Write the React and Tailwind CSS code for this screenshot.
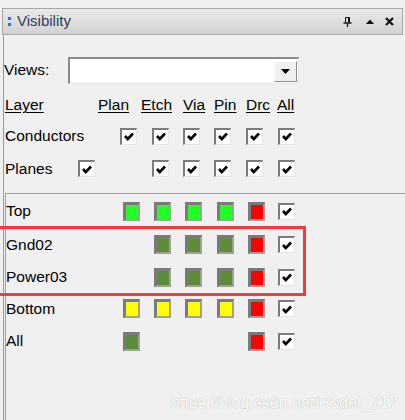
import React from "react";

const Check = () => (
  <div className="w-[17px] h-[17px] border-t-2 border-l-2 border-t-[#7c7c7c] border-l-[#7c7c7c] border-r border-b border-r-[#e6e6e6] border-b-[#e6e6e6] bg-white flex items-center justify-center">
    <svg width="10" height="9" viewBox="0 0 10 9">
      <path d="M1 4 L3.8 7 L9 1.5" stroke="#000" strokeWidth="2.6" fill="none" />
    </svg>
  </div>
);

const Box = ({ c, ml = "ml-[2px]" }) => (
  <div className={`${ml} w-[17px] h-[19px] border-t-[3px] border-l-[3px] border-t-[#7a7a7a] border-l-[#7a7a7a] border-r-2 border-b-2 border-r-[#a0a0a0] border-b-[#a0a0a0] flex`}>
    <div className={`flex-1 ${c}`} />
  </div>
);

const G = "bg-[#22ff22]";
const D = "bg-[#5e8c3a]";
const R = "bg-[#ff0000]";
const Y = "bg-[#ffff00]";

const font = "font-['Liberation_Sans',Arial,sans-serif]";

export default function App() {
  return (
    <div className={`relative w-[405px] h-[420px] bg-[#f0f0f0] overflow-hidden text-[15.5px] text-black ${font}`}>
      <div className="h-[8px]" />
      {/* Title bar */}
      <div className="mx-[2px] h-[27px] border border-[#a8a8a8] bg-gradient-to-b from-[#e9e9e9] to-[#d2d2d2] flex items-center">
        <div className="ml-[5px] flex flex-col gap-[3px]">
          <div className="w-[3px] h-[3px] bg-[#1f7ae0]" />
          <div className="w-[3px] h-[3px] bg-[#1f7ae0]" />
        </div>
        <span className="ml-[6px] text-[15px] text-[#2a3d5c]">Visibility</span>
        <div className="ml-auto flex items-center mr-[8px]">
          <svg width="9" height="10" viewBox="0 0 9 10" className="mr-[14px]">
            <path d="M2.5 0.5 H6.5 V5.5 M5.5 0.5 V5.5" stroke="#111" strokeWidth="1" fill="none" />
            <path d="M2.5 0.5 V5.5" stroke="#111" strokeWidth="1" />
            <path d="M0.5 6 H8.5" stroke="#111" strokeWidth="1.4" />
            <path d="M4.5 6 V10" stroke="#111" strokeWidth="1.2" />
          </svg>
          <svg width="8" height="5" viewBox="0 0 8 5" className="mr-[11px]">
            <path d="M0 5 L4 0.5 L8 5 Z" fill="#111" />
          </svg>
          <svg width="9" height="9" viewBox="0 0 9 9">
            <path d="M1 1 L8 8 M8 1 L1 8" stroke="#111" strokeWidth="2.2" />
          </svg>
        </div>
      </div>

      {/* Panel */}
      <div className="ml-[3px] border-l border-[#9a9a9a] h-[385px] flex flex-col">
        <div className="h-[22px]" />
        {/* Views row */}
        <div className="flex items-center h-[27px]">
          <div className="w-[64px] -mt-[1px]">Views:</div>
          <div className="w-[231px] h-[27px] border-t-2 border-l-2 border-t-[#8a8a8a] border-l-[#8a8a8a] border-r border-b border-r-[#e4e4e4] border-b-[#e4e4e4] bg-white flex items-center justify-end pr-[1px]">
            <div className="w-[23px] h-[21px] bg-[#f0f0f0] border-t border-l border-t-white border-l-white border-r border-b border-r-[#8a8a8a] border-b-[#8a8a8a] flex items-center justify-center">
              <svg width="9" height="5" viewBox="0 0 9 5">
                <path d="M0 0 H9 L4.5 5 Z" fill="#000" />
              </svg>
            </div>
          </div>
        </div>

        {/* Header */}
        <div className="mt-[6px] h-[30px] flex items-center underline underline-offset-2">
          <div className="ml-[1px] w-[93px]">Layer</div>
          <div className="w-[43px]">Plan</div>
          <div className="w-[42px]">Etch</div>
          <div className="w-[31px]">Via</div>
          <div className="w-[32px]">Pin</div>
          <div className="w-[31px]">Drc</div>
          <div>All</div>
        </div>

        {/* Upper grid */}
        <div className="grid grid-cols-[74px_42px_32px_31px_31px_32px_32px_1fr] grid-rows-[32px_33px] items-center">
          <div className="col-start-1 ml-[1px] whitespace-nowrap">Conductors</div>
          <div className="col-start-3"><Check /></div>
          <div className="col-start-4"><Check /></div>
          <div className="col-start-5"><Check /></div>
          <div className="col-start-6"><Check /></div>
          <div className="col-start-7"><Check /></div>
          <div className="col-start-8"><Check /></div>

          <div className="col-start-1 ml-[1px]">Planes</div>
          <div className="col-start-2"><Check /></div>
          <div className="col-start-4"><Check /></div>
          <div className="col-start-5"><Check /></div>
          <div className="col-start-6"><Check /></div>
          <div className="col-start-7"><Check /></div>
          <div className="col-start-8"><Check /></div>
        </div>

        {/* Lower pane */}
        <div className="mt-[8px] ml-[1px] flex-1 border-t border-l border-[#a0a0a0]">
          <div className="grid grid-cols-[114px_32px_31px_31px_32px_32px_1fr] grid-rows-[34px_33px_32px_31px_34px] items-center">
            <div className="col-start-1 row-start-1">Top</div>
            <div className="col-start-2 row-start-1"><Box c={G} ml="ml-[3px]" /></div>
            <div className="col-start-3 row-start-1"><Box c={G} /></div>
            <div className="col-start-4 row-start-1"><Box c={G} /></div>
            <div className="col-start-5 row-start-1"><Box c={G} ml="ml-[3px]" /></div>
            <div className="col-start-6 row-start-1"><Box c={R} /></div>
            <div className="col-start-7 row-start-1"><Check /></div>

            <div className="col-start-1 row-start-2">Gnd02</div>
            <div className="col-start-3 row-start-2"><Box c={D} /></div>
            <div className="col-start-4 row-start-2"><Box c={D} /></div>
            <div className="col-start-5 row-start-2"><Box c={D} ml="ml-[3px]" /></div>
            <div className="col-start-6 row-start-2"><Box c={R} /></div>
            <div className="col-start-7 row-start-2"><Check /></div>

            <div className="col-start-1 row-start-3">Power03</div>
            <div className="col-start-3 row-start-3"><Box c={D} /></div>
            <div className="col-start-4 row-start-3"><Box c={D} /></div>
            <div className="col-start-5 row-start-3"><Box c={D} ml="ml-[3px]" /></div>
            <div className="col-start-6 row-start-3"><Box c={R} /></div>
            <div className="col-start-7 row-start-3"><Check /></div>

            <div className="col-start-1 row-start-4">Bottom</div>
            <div className="col-start-2 row-start-4"><Box c={Y} ml="ml-[3px]" /></div>
            <div className="col-start-3 row-start-4"><Box c={Y} /></div>
            <div className="col-start-4 row-start-4"><Box c={Y} /></div>
            <div className="col-start-5 row-start-4"><Box c={Y} ml="ml-[3px]" /></div>
            <div className="col-start-6 row-start-4"><Box c={R} /></div>
            <div className="col-start-7 row-start-4"><Check /></div>

            <div className="col-start-1 row-start-5">All</div>
            <div className="col-start-2 row-start-5"><Box c={D} ml="ml-[3px]" /></div>
            <div className="col-start-6 row-start-5"><Box c={R} /></div>
            <div className="col-start-7 row-start-5"><Check /></div>
          </div>
        </div>
      </div>

      {/* Red highlight */}
      <div className="absolute left-[-3px] top-[226px] w-[309px] h-[70px] border-[3px] border-[#f23b3b]" />

      {/* Watermark */}
      <div className="absolute left-[171px] top-[391px] text-[16px] text-white [text-shadow:0_0_1px_#9a9a9a] font-['Liberation_Sans',Arial,sans-serif]">
        https://blog.csdn.net/Roger_717
      </div>
    </div>
  );
}
